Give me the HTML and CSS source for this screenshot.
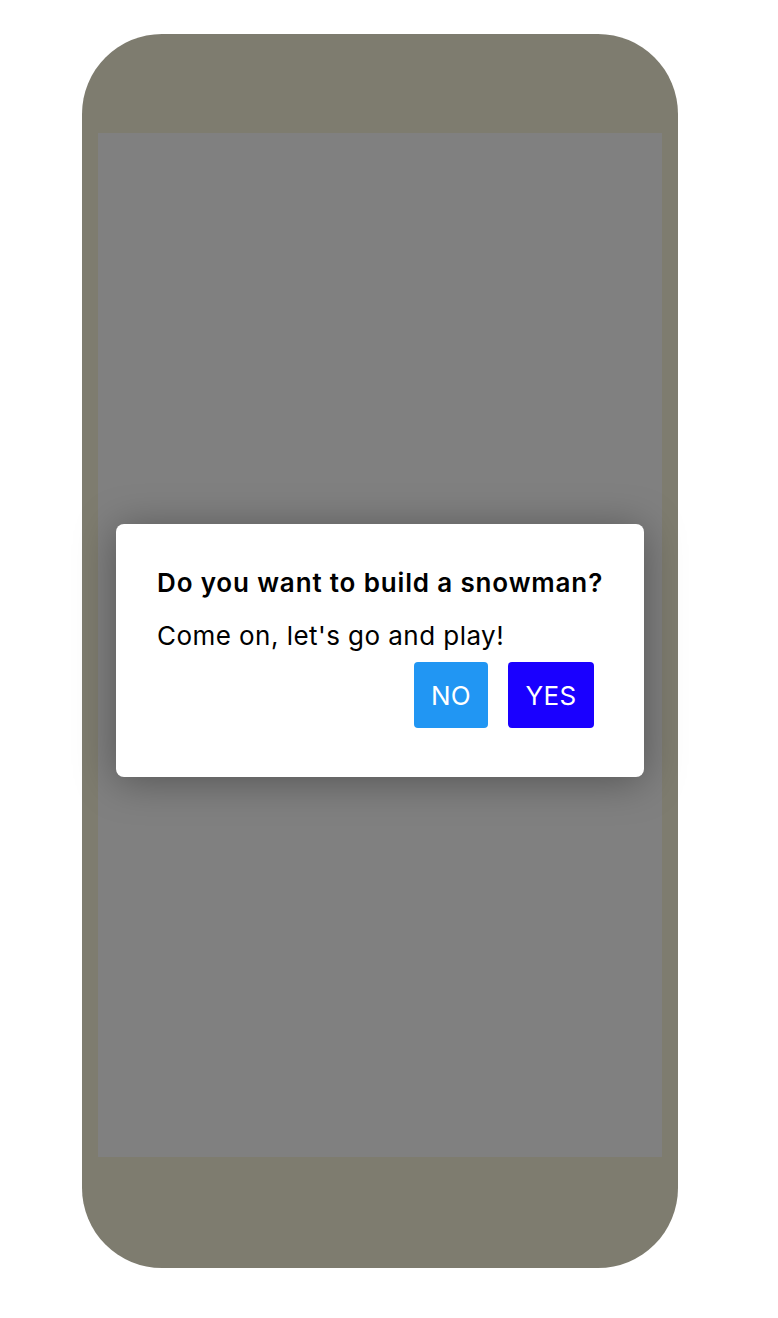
FILE: index.html
```html
<!DOCTYPE html>
<html>
<head>
<meta charset="utf-8">
<link rel="stylesheet" href="styles.css">
</head>
<body>
<div class="page">
  <div class="phone">
    <div class="screen">
      <div class="dialog">
        <h2 class="title">Do you want to build a snowman?</h2>
        <p class="message">Come on, let's go and play!</p>
        <div class="actions">
          <button class="btn btn-no">NO</button>
          <button class="btn btn-yes">YES</button>
        </div>
      </div>
    </div>
  </div>
</div>
</body>
</html>
```
FILE: styles.css
```css
html, body {
  margin: 0;
  padding: 0;
  background: #ffffff;
}
body {
  font-family: Inter, "Noto Sans", "Liberation Sans", sans-serif;
}
.page {
  padding: 34px 0 0 82px;
}
.phone {
  box-sizing: border-box;
  width: 596px;
  height: 1234px;
  background: #7e7c6f;
  border-radius: 80px;
  padding: 99px 16px 0 16px;
}
.screen {
  box-sizing: border-box;
  width: 564px;
  height: 1024px;
  background: #808080;
  display: flex;
  flex-direction: column;
  align-items: center;
  padding-top: 391px;
}
.dialog {
  box-sizing: border-box;
  width: 528px;
  height: 253px;
  background: #ffffff;
  border-radius: 8px;
  padding: 43px 40px 39px 41px;
  box-shadow: 0 4px 40px rgba(0, 0, 0, 0.35);
}
.title {
  margin: 0;
  font-size: 26px;
  font-weight: 600;
  line-height: 32px;
  letter-spacing: 0.85px;
  color: #000;
  white-space: nowrap;
}
.message {
  margin: 21px 0 0 0;
  font-size: 26px;
  font-weight: 400;
  line-height: 32px;
  letter-spacing: 0.45px;
  color: #000;
  white-space: nowrap;
}
.actions {
  display: flex;
  justify-content: flex-end;
}
.btn {
  border: none;
  border-radius: 4px;
  color: #ffffff;
  font-family: inherit;
  font-size: 26px;
  font-weight: 400;
  letter-spacing: 0.3px;
  height: 66px;
  margin: 10px;
  padding: 0;
}
.btn-no {
  background: #2196f3;
  width: 74px;
}
.btn-yes {
  background: #1a00ff;
  width: 86px;
}
```
